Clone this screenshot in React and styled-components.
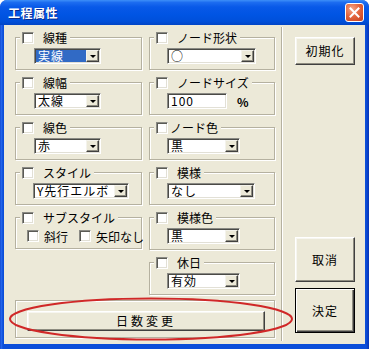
import React from "react";
import styled, { createGlobalStyle } from "styled-components";

const GlobalStyle = createGlobalStyle`
  html, body { margin: 0; padding: 0; background: #ffffff; }
  body {
    font-family: "Noto Sans CJK JP", "Noto Sans CJK SC", sans-serif;
    font-size: 12px;
    line-height: 14px;
    color: #000;
  }
  * { box-sizing: border-box; }
`;

const Window = styled.div`
  width: 369px;
  height: 349px;
  display: flex;
  flex-direction: column;
  background: linear-gradient(90deg, #0A3CC4 0, #2A6CF0 1px, #0B4ED9 3px, #0B4ED9 calc(100% - 3px), #0733B5 100%);
  border-radius: 7px 7px 0 0;
  overflow: hidden;
`;

const TitleBar = styled.div`
  height: 25px;
  flex: none;
  display: flex;
  align-items: center;
  justify-content: space-between;
  padding: 0 5px 0 8px;
  background: linear-gradient(180deg, #3D8FF8 0%, #1C6CF0 10%, #0859E8 28%, #0054E3 60%, #0050DA 85%, #0145C6 100%);
`;

const Title = styled.span`
  color: #ffffff;
  font-weight: 700;
  font-size: 12px;
  letter-spacing: 0.5px;
  text-shadow: 1px 1px 0 #0A2A8C;
`;

const CloseButton = styled.div`
  width: 19px;
  height: 19px;
  border: 1px solid #ffffff;
  border-radius: 3px;
  background: radial-gradient(circle at 35% 30%, #F4A689 0%, #E4673F 45%, #C43E1C 100%);
  display: flex;
  align-items: center;
  justify-content: center;
`;

const Client = styled.div`
  flex: 1;
  margin: 0 4px 5px 4px;
  background: #ECE9D8;
  display: flex;
  position: relative;
`;

const LeftArea = styled.div`
  display: flex;
  flex-direction: column;
  padding: 6px 0 0 11px;
`;

const Columns = styled.div`
  display: flex;
  gap: 7px;
`;

const Column = styled.div`
  width: ${(p) => p.$w}px;
  display: flex;
  flex-direction: column;
`;

const GroupWrap = styled.div`
  display: flex;
  flex-direction: column;
  margin-bottom: 6px;
`;

const Legend = styled.div`
  align-self: flex-start;
  height: 13px;
  margin: 0 0 -7px 5px;
  padding: 0 3px 0 2px;
  display: flex;
  align-items: center;
  gap: ${(p) => p.$gap}px;
  background: #ECE9D8;
  position: relative;
  z-index: 1;
  line-height: 13px;
`;

const Frame = styled.div`
  height: ${(p) => p.$h || 33}px;
  border: 1px solid #B5B1A0;
  box-shadow: inset 1px 1px 0 #ffffff, 1px 1px 0 #ffffff;
  padding: ${(p) => p.$pad || "10px 6px 5px 17px"};
  display: flex;
  align-items: center;
  gap: 10px;
`;

const Check = styled.span`
  width: 12px;
  height: 12px;
  flex: none;
  background: #ffffff;
  border: 1px solid;
  border-color: #8A8A84 #FFFFFF #FFFFFF #8A8A84;
  box-shadow: inset 1px 1px 0 #5A5A55, inset -1px -1px 0 #E2E0D6;
`;

const Label = styled.span`
  font-size: 12px;
  line-height: 13px;
  white-space: nowrap;
`;

const Field = styled.div`
  width: ${(p) => p.$w}px;
  height: 16px;
  flex: none;
  display: flex;
  padding: 1px;
  background: #ffffff;
  border: 1px solid;
  border-color: #8A8A84 #FFFFFF #FFFFFF #8A8A84;
  box-shadow: inset 1px 1px 0 #4A4A46, inset -1px -1px 0 #E2E0D6;
`;

const FieldText = styled.span`
  flex: 1;
  height: 12px;
  line-height: 12px;
  padding-left: 2px;
  font-size: 12px;
  letter-spacing: 1px;
  white-space: nowrap;
  background: ${(p) => (p.$selected ? "#316AC5" : "transparent")};
  color: ${(p) => (p.$selected ? "#ffffff" : "#000000")};
`;

const ArrowButton = styled.span`
  width: 13px;
  height: 12px;
  flex: none;
  background: #ECE9D8;
  border: 1px solid;
  border-color: #F4F3EC #404040 #404040 #F4F3EC;
  box-shadow: inset -1px -1px 0 #8E8C80;
  display: flex;
  align-items: center;
  justify-content: center;
`;

const Triangle = styled.span`
  width: 0;
  height: 0;
  border-left: 3px solid transparent;
  border-right: 3px solid transparent;
  border-top: 3px solid #000000;
  margin-top: 1px;
`;

const Unit = styled.span`
  font-size: 12px;
  line-height: 13px;
  font-weight: 700;
`;

const SubRow = styled.div`
  display: flex;
  align-items: center;
  gap: 11px;
`;

const SubItem = styled.div`
  display: flex;
  align-items: center;
  gap: 5px;
  height: 14px;
`;

const BottomBox = styled.div`
  width: 260px;
  height: 38px;
  margin-top: -1px;
  border: 1px solid #B5B1A0;
  box-shadow: inset 1px 1px 0 #ffffff, 1px 1px 0 #ffffff;
  padding: 10px 10px 6px 11px;
`;

const Button = styled.div`
  width: ${(p) => p.$w}px;
  height: ${(p) => p.$h}px;
  flex: none;
  display: flex;
  align-items: center;
  justify-content: center;
  background: #ECE9D8;
  font-size: 12px;
  line-height: 14px;
  letter-spacing: ${(p) => p.$ls || 1}px;
  border: 1px solid;
  border-color: ${(p) => (p.$default ? "#000000" : "#FFFFFF #404040 #404040 #FFFFFF")};
  box-shadow: ${(p) =>
    p.$default
      ? "inset 1px 1px 0 #ffffff, inset -1px -1px 0 #404040, inset -2px -2px 0 #8E8C80"
      : "inset -1px -1px 0 #8E8C80, inset 1px 1px 0 #F7F6F0"};
  margin-top: ${(p) => p.$mt || "0"};
`;

const Separator = styled.div`
  width: 2px;
  margin: 2px 0 3px 6px;
  border-left: 1px solid #B5B1A0;
  border-right: 1px solid #ffffff;
`;

const RightColumn = styled.div`
  width: 60px;
  margin-left: 12px;
  padding: 12px 0 11px 0;
  display: flex;
  flex-direction: column;
  gap: 6px;
`;

const Overlay = styled.svg`
  position: absolute;
  left: 0;
  top: 0;
  pointer-events: none;
`;

function Combo({ w, value, selected }) {
  return (
    <Field $w={w}>
      <FieldText $selected={selected}>{value}</FieldText>
      <ArrowButton>
        <Triangle />
      </ArrowButton>
    </Field>
  );
}

function Group({ label, gap = 9, pad, h, children }) {
  return (
    <GroupWrap>
      <Legend $gap={gap}>
        <Check />
        <Label>{label}</Label>
      </Legend>
      <Frame $pad={pad} $h={h}>
        {children}
      </Frame>
    </GroupWrap>
  );
}

export default function App() {
  return (
    <>
      <GlobalStyle />
      <Window>
        <TitleBar>
          <Title>工程属性</Title>
          <CloseButton>
            <svg width="11" height="11" viewBox="0 0 11 11">
              <path d="M1.5 1.5 L9.5 9.5 M9.5 1.5 L1.5 9.5" stroke="#fff" strokeWidth="2" strokeLinecap="square" />
            </svg>
          </CloseButton>
        </TitleBar>
        <Client>
          <LeftArea>
            <Columns>
              <Column $w={127}>
                <Group label="線種" pad="10px 6px 5px 18px">
                  <Combo w={67} value="実線" selected />
                </Group>
                <Group label="線幅" pad="10px 6px 5px 18px">
                  <Combo w={67} value="太線" />
                </Group>
                <Group label="線色" pad="10px 6px 5px 18px">
                  <Combo w={67} value="赤" />
                </Group>
                <Group label="スタイル" pad="10px 6px 5px 17px">
                  <Combo w={96} value="Y先行エルボ" />
                </Group>
                <Group label="サブスタイル" pad="11px 6px 5px 11px" h={32}>
                  <SubRow>
                    <SubItem>
                      <Check />
                      <Label>斜行</Label>
                    </SubItem>
                    <SubItem>
                      <Check />
                      <Label>矢印なし</Label>
                    </SubItem>
                  </SubRow>
                </Group>
              </Column>
              <Column $w={126}>
                <Group label="ノード形状">
                  <Combo w={89} value="○" />
                </Group>
                <Group label="ノードサイズ">
                  <Field $w={60}>
                    <FieldText>100</FieldText>
                  </Field>
                  <Unit>%</Unit>
                </Group>
                <Group label="ノード色" gap={2}>
                  <Combo w={73} value="黒" />
                </Group>
                <Group label="模様">
                  <Combo w={88} value="なし" />
                </Group>
                <Group label="模様色">
                  <Combo w={73} value="黒" />
                </Group>
                <Group label="休日">
                  <Combo w={73} value="有効" />
                </Group>
              </Column>
            </Columns>
            <BottomBox>
              <Button $w={238} $h={20} $ls={3}>日数変更</Button>
            </BottomBox>
          </LeftArea>
          <Separator />
          <RightColumn>
            <Button $w={60} $h={28}>初期化</Button>
            <Button $w={60} $h={45} $mt="auto">取消</Button>
            <Button $w={60} $h={45} $default>決定</Button>
          </RightColumn>
          <Overlay width="361" height="319" viewBox="0 0 361 319">
            <ellipse cx="147" cy="294" rx="141" ry="20.5" fill="none" stroke="#D02828" strokeWidth="2" />
          </Overlay>
        </Client>
      </Window>
    </>
  );
}
